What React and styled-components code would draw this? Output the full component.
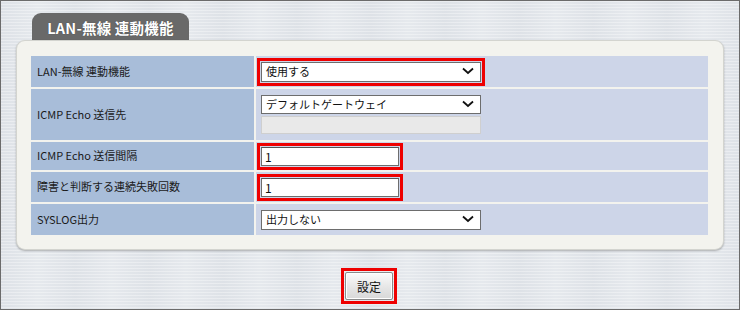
import React from "react";
import styled, { createGlobalStyle } from "styled-components";

const Global = createGlobalStyle`
  html, body { margin: 0; padding: 0; }
  body { width: 740px; height: 310px; overflow: hidden; }
  * { box-sizing: border-box; }
`;

const Page = styled.div`
  width: 740px;
  height: 310px;
  border: 1px solid #6b6b6b;
  background-color: #e1e5ea;
  background-image:
    repeating-linear-gradient(180deg, rgba(255,255,255,0.35) 0px, rgba(255,255,255,0.35) 1px, rgba(0,0,0,0) 1px, rgba(0,0,0,0) 3px),
    repeating-linear-gradient(90deg, rgba(200,205,212,0.15) 0px, rgba(255,255,255,0.15) 37px, rgba(200,205,212,0.15) 74px);
  padding-top: 12px;
  font-family: "Noto Sans CJK JP", "Liberation Sans", sans-serif;
  color: #111;
  display: flex;
  flex-direction: column;
`;

const Tab = styled.div`
  margin-left: 31px;
  width: 157px;
  height: 27px;
  background: #696969;
  border-radius: 9px 9px 0 0;
  color: #fff;
  font-weight: 700;
  font-size: 14.5px;
  letter-spacing: 0.2px;
  display: flex;
  align-items: center;
  justify-content: center;
  padding-top: 1px;
  text-shadow: 0 0 1px rgba(0,0,0,0.4);
`;

const Panel = styled.div`
  margin-left: 15px;
  width: 708px;
  height: 210px;
  background: #f3f3ee;
  border: 1px solid #d3d4cf;
  border-radius: 9px;
  box-shadow: 0 1px 2px rgba(0,0,0,0.28);
  padding: 15px 0 0 14px;
`;

const Grid = styled.div`
  width: 677px;
  display: grid;
  grid-template-columns: 223px 452px;
  column-gap: 2px;
  row-gap: 2px;
`;

const Label = styled.div`
  background: #a8bdd9;
  height: ${(p) => p.$h}px;
  display: flex;
  align-items: center;
  padding-left: 6px;
  padding-bottom: 2px;
  font-size: 11px;
  color: #1a1a1a;
`;

const Value = styled.div`
  background: #cdd5e8;
  height: ${(p) => p.$h}px;
  display: flex;
  flex-direction: column;
  justify-content: center;
  gap: 2px;
  padding-left: 1px;
`;

const Mark = styled.div`
  align-self: flex-start;
  border: 3px solid ${(p) => (p.$on ? "#ee0000" : "transparent")};
  padding: 1px;
  display: flex;
`;

const Plain = styled.div`
  align-self: flex-start;
  padding-left: 4px;
  display: flex;
  flex-direction: column;
  gap: 2px;
`;

const SelectBox = styled.div`
  width: 220px;
  height: ${(p) => p.$h || 20}px;
  background: #fff;
  border: 1px solid #6d6d6d;
  display: flex;
  align-items: center;
  justify-content: space-between;
  padding: 0 6px 1px 4px;
  font-size: 11px;
  color: #111;
`;

const TextBox = styled.div`
  width: 138px;
  height: 19px;
  background: #fff;
  border: 1px solid #6d6d6d;
  border-top-color: #555;
  display: flex;
  align-items: center;
  padding-left: 3px;
  font-size: 12px;
`;

const Disabled = styled.div`
  width: 220px;
  height: 18px;
  background: #e9e9e9;
  border: 1px solid #cfcfcf;
`;

const Footer = styled.div`
  display: flex;
  justify-content: center;
  padding-top: 18px;
  padding-right: 2px;
`;

const ButtonMark = styled.div`
  border: 3px solid #ee0000;
  padding: 1px;
  display: flex;
`;

const Button = styled.div`
  width: 48px;
  height: 28px;
  border: 1px solid #8a8a8a;
  border-radius: 2px;
  background: linear-gradient(#fbfbfb, #e4e4e4 60%, #d8d8d8);
  box-shadow: inset 0 0 0 1px #fff;
  display: flex;
  align-items: center;
  justify-content: center;
  font-size: 12px;
  color: #111;
`;

const Chevron = () => (
  <svg width="12" height="8" viewBox="0 0 12 8">
    <path d="M1 1.5 L6 6 L11 1.5" fill="none" stroke="#111" strokeWidth="1.8" />
  </svg>
);

const Select = ({ text, h }) => (
  <SelectBox $h={h}>
    <span>{text}</span>
    <Chevron />
  </SelectBox>
);

export default function App() {
  return (
    <>
      <Global />
      <Page>
        <Tab>LAN-無線 連動機能</Tab>
        <Panel>
          <Grid>
            <Label $h={31}>LAN-無線 連動機能</Label>
            <Value $h={31}>
              <Mark $on>
                <Select text="使用する" />
              </Mark>
            </Value>

            <Label $h={51}>ICMP Echo 送信先</Label>
            <Value $h={51}>
              <Plain>
                <Select text="デフォルトゲートウェイ" h={19} />
                <Disabled />
              </Plain>
            </Value>

            <Label $h={28}>ICMP Echo 送信間隔</Label>
            <Value $h={28}>
              <Mark $on>
                <TextBox>1</TextBox>
              </Mark>
            </Value>

            <Label $h={30}>障害と判断する連続失敗回数</Label>
            <Value $h={30}>
              <Mark $on>
                <TextBox>1</TextBox>
              </Mark>
            </Value>

            <Label $h={31}>SYSLOG出力</Label>
            <Value $h={31}>
              <Plain>
                <Select text="出力しない" />
              </Plain>
            </Value>
          </Grid>
        </Panel>
        <Footer>
          <ButtonMark>
            <Button>設定</Button>
          </ButtonMark>
        </Footer>
      </Page>
    </>
  );
}
